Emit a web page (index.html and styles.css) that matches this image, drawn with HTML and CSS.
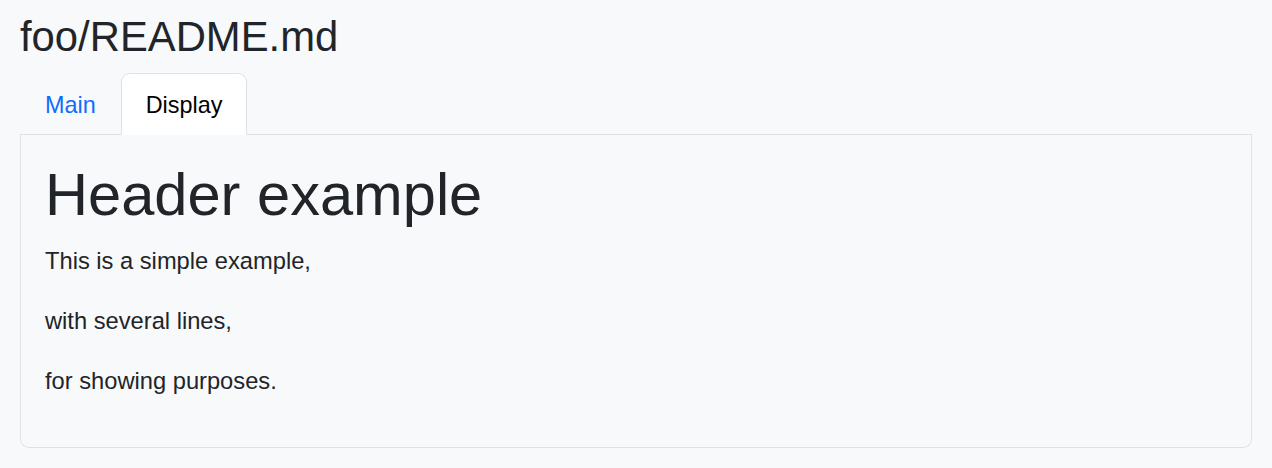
FILE: index.html
```html
<!DOCTYPE html>
<html lang="en">
<head>
<meta charset="utf-8">
<title>foo/README.md</title>
<link rel="stylesheet" href="styles.css">
</head>
<body>
<div class="page">
  <h3 class="title">foo/README.md</h3>
  <ul class="tabs">
    <li><a class="tab-link" href="#">Main</a></li>
    <li><a class="tab-link active" href="#">Display</a></li>
  </ul>
  <div class="panel">
    <h1 class="doc-h1">Header example</h1>
    <p class="doc-p">This is a simple example,</p>
    <p class="doc-p">with several lines,</p>
    <p class="doc-p">for showing purposes.</p>
  </div>
</div>
</body>
</html>
```

FILE: styles.css
```css
* { box-sizing: border-box; }
html, body { margin: 0; padding: 0; }
body {
  background: #f8f9fa;
  color: #212529;
  font-family: "Liberation Sans", Arial, sans-serif;
  font-size: 24px;
  line-height: 1.5;
}
.page {
  padding: 12px 20px 20px 20px;
}
.title {
  margin: 0 0 11px 0;
  font-size: 41.8px;
  font-weight: 400;
  line-height: 50px;
}
.tabs {
  list-style: none;
  margin: 0;
  padding: 0;
  display: flex;
  border-bottom: 1px solid #dee2e6;
}
.tab-link {
  display: block;
  padding: 13px 24px 11px 24px;
  margin-bottom: -1px;
  border: 1px solid transparent;
  border-top-left-radius: 9px;
  border-top-right-radius: 9px;
  color: #0d6efd;
  text-decoration: none;
  font-size: 23.4px;
  line-height: 36px;
}
.tab-link.active {
  color: #000;
  background: #fff;
  border-color: #dee2e6 #dee2e6 #fff;
}
.panel {
  border: 1px solid #dee2e6;
  border-top: 0;
  border-radius: 0 0 9px 9px;
  padding: 24px;
}
.doc-h1 {
  margin: 0 0 12px 0;
  font-size: 59.6px;
  font-weight: 400;
  line-height: 72px;
}
.doc-p {
  margin: 0 0 24px 0;
  font-size: 23.7px;
  line-height: 36px;
}
```
